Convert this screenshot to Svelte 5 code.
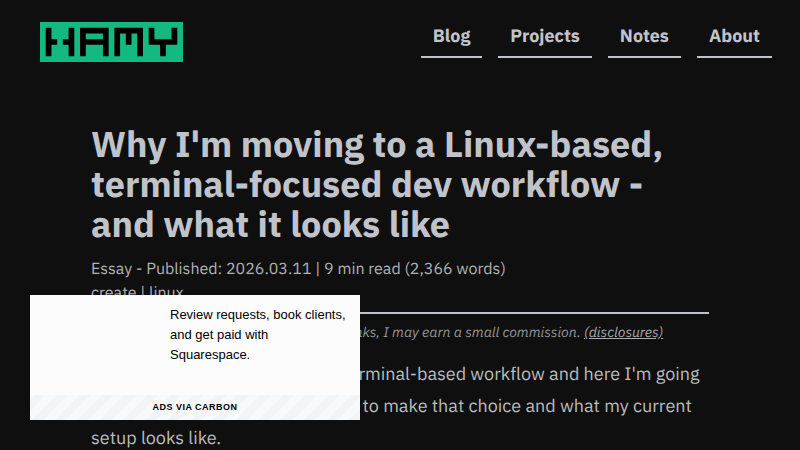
<script lang="ts">
  const links = ['Blog', 'Projects', 'Notes', 'About'];

  // each letter sits on a 5x5 grid
  const letters = [
    ['#...#', '#...#', '##.##', '#...#', '#...#'],
    ['#####', '#...#', '#####', '#...#', '#...#'],
    ['#####', '#.#.#', '#.#.#', '#...#', '#...#'],
    ['#...#', '#...#', '#####', '..#..', '..#..'],
  ];

  const logoPath = letters
    .flatMap((rows, letter) =>
      rows.flatMap((row, y) =>
        [...row].map((cell, x) => (cell === '#' ? `M${1 + letter * 6 + x} ${1 + y}h1v1h-1z` : ''))
      )
    )
    .join('');
</script>

<header>
  <a class="logo" href="/" aria-label="HAMY">
    <svg viewBox="0 0 25 7" preserveAspectRatio="none" aria-hidden="true">
      <rect width="25" height="7" fill="#13b981" />
      <path d={logoPath} />
    </svg>
  </a>
  <nav>
    {#each links as link}
      <a href="/{link.toLowerCase()}">{link}</a>
    {/each}
  </nav>
</header>

<main>
  <article>
    <h1>Why I'm moving to a Linux-based, terminal-focused dev workflow - and what it looks like</h1>
    <div class="meta">Essay - Published: 2026.03.11 | 9 min read (2,366 words)</div>
    <div class="meta"><a href="/tags/create">create</a> | <a href="/tags/linux">linux</a></div>
    <hr />
    <p class="disclosure">
      Disclosure: If you get through my affiliate links, I may earn a small commission.
      <a href="/disclosures">(disclosures)</a>
    </p>
    <p>
      I've recently shifted to a Linux, terminal-based workflow and here I'm going to share
      the reasons why I aimed to make that choice and what my current setup looks like.
    </p>
  </article>
</main>

<aside aria-label="Advertisement">
  <a class="adText" href="/ad">Review requests, book clients, and get paid with Squarespace.</a>
  <a class="adSource" href="/carbon">Ads via Carbon</a>
</aside>

<style>
  :global(body) {
    margin: 0;
    background: #0f0f0f;
    color: #c1c3cb;
    font-family: 'IBM Plex Sans', 'Noto Sans', sans-serif;
    font-size: 18px;
    line-height: 32px;
    text-rendering: geometricPrecision;
  }

  a {
    color: inherit;
    text-decoration: none;
  }

  header {
    display: flex;
    align-items: flex-start;
    justify-content: space-between;
    padding: 14px 28px 0 40px;
  }

  .logo {
    margin-top: 8px;
  }

  .logo svg {
    display: block;
    width: 143px;
    height: 40px;
  }

  nav {
    display: flex;
    gap: 16px;
  }

  nav a {
    padding: 8px 12px 6px;
    border-bottom: 2px solid #c1c3cb;
    font-weight: 700;
    line-height: 28px;
  }

  main {
    max-width: 618px;
    margin: 0 auto;
    padding: 62px 16px 0;
  }

  h1 {
    margin: 0 0 13px;
    font-size: 36px;
    font-weight: 700;
    line-height: 40px;
  }

  .meta {
    color: #b0b2b4;
    font-size: 16px;
    line-height: 24px;
  }

  hr {
    margin: 7px 0 8px;
    border: 0;
    border-top: 2px solid #c1c3cb;
  }

  p {
    margin: 0;
    color: #babcbf;
  }

  .disclosure {
    margin-bottom: 16px;
    color: #949698;
    font-size: 14px;
    font-style: italic;
    line-height: 20px;
  }

  .disclosure a {
    color: #a8aaad;
    text-decoration: underline;
  }

  aside {
    position: fixed;
    left: 30px;
    bottom: 30px;
    display: flex;
    flex-direction: column;
    width: 330px;
    background: #fcfcfc;
    color: #000;
    font-family: 'Liberation Sans', Arial, sans-serif;
    text-rendering: auto;
  }

  .adText {
    min-height: 80px;
    padding: 10px 10px 10px 140px;
    font-size: 13px;
    line-height: 20px;
  }

  .adSource {
    padding: 5px 0;
    background: repeating-linear-gradient(-45deg, #f3f4f5, #f3f4f5 8px, #f8f9fa 8px, #f8f9fa 16px);
    font-size: 9px;
    font-weight: 700;
    letter-spacing: 0.5px;
    line-height: 15px;
    text-align: center;
    text-transform: uppercase;
  }
</style>
